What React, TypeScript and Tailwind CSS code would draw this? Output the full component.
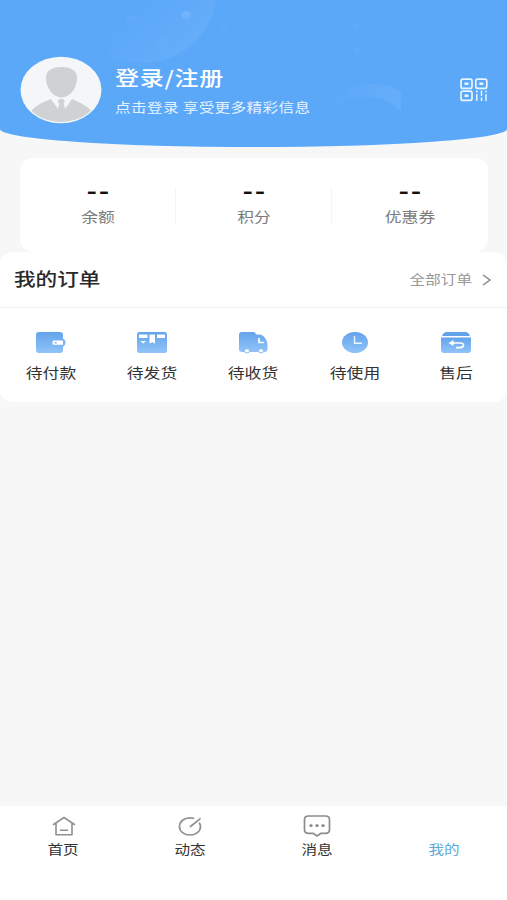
import React from 'react';

type StretchProps = { children: React.ReactNode; className?: string };

function Wide({ children, className = '' }: StretchProps) {
  return <span className={`inline-block scale-x-120 whitespace-nowrap ${className}`}>{children}</span>;
}

function Gradient({ id }: { id: string }) {
  return (
    <defs>
      <linearGradient id={id} x1="0" y1="0" x2="0" y2="1">
        <stop offset="0" stopColor="#62a4ea" />
        <stop offset="1" stopColor="#91c3f9" />
      </linearGradient>
    </defs>
  );
}

function HeaderDecoration() {
  return (
    <svg className="absolute inset-0" width="507" height="147" viewBox="0 0 507 147" fill="none">
      <defs>
        <linearGradient id="bubble" x1="0.1" y1="0" x2="1" y2="0.6">
          <stop offset="0.2" stopColor="#fff" stopOpacity="0" />
          <stop offset="1" stopColor="#fff" stopOpacity="0.07" />
        </linearGradient>
        <linearGradient id="arc" x1="0" y1="0" x2="1" y2="0">
          <stop offset="0" stopColor="#fff" stopOpacity="0" />
          <stop offset="1" stopColor="#fff" stopOpacity="0.07" />
        </linearGradient>
      </defs>
      <path d="M109 0H215C213 34 181 63 142 63C130 63 119 60 109 57Z" fill="url(#bubble)" />
      <ellipse cx="186" cy="15" rx="5" ry="4" fill="#70b3fb" />
      <ellipse cx="132" cy="19" rx="6" ry="4" fill="#62abf9" />
      <ellipse cx="162" cy="43" rx="5" ry="5" fill="#64adfa" />
      <ellipse cx="224" cy="29" rx="4" ry="3" fill="#5faafa" />
      <circle cx="356" cy="27" r="4" fill="#5faafa" />
      <circle cx="357" cy="51" r="4" fill="#5faafa" />
      <path d="M332 108C338 91 352 84 371 84C384 84 394 87 401 92V112C389 98 378 97 365 97C352 97 344 101 338 108Z" fill="url(#arc)" />
    </svg>
  );
}

function Avatar() {
  return (
    <svg className="shrink-0" width="82" height="68" viewBox="0 0 82 68">
      <defs>
        <clipPath id="face"><ellipse cx="41" cy="34" rx="39" ry="32" /></clipPath>
      </defs>
      <ellipse cx="41" cy="34" rx="40.5" ry="33.3" fill="#f5f6f8" />
      <g clipPath="url(#face)" fill="#d0d1d3">
        <path d="M26 22C26 15 31 11 41.500 11C52 11 57 15 57 22C57 32 50 41.500 41.500 41.500C33 41.500 26 32 26 22Z" />
        <path d="M10 57C13 51 21 47 31 43L38 53L39.500 47L37.500 45.500L39.500 43H43L45 45.500L43.500 47L45 53L52 43C61 47 69 51 72 56C65 64 54 67 41 67C28 67 17 64 10 57Z" />
        <path d="M38 52L40 47H42.500L45 52L41.500 55Z" />
      </g>
    </svg>
  );
}

function QrIcon() {
  return (
    <svg width="28" height="24" viewBox="0 0 28 24" fill="none" stroke="#e6f5ff" strokeWidth="1.700">
      <rect x="1" y="1.200" width="11" height="9.200" rx="2" />
      <rect x="15.800" y="1.200" width="11" height="9.200" rx="2" />
      <rect x="1" y="13.200" width="11" height="9.200" rx="2" />
      <path d="M4.500 5.800H8.500M19.300 5.800H23.300M4.500 17.800H8.500" strokeWidth="2.600" />
      <path d="M16.800 12.500V14.500M16.800 16V23M21.500 12.500V18M21.500 19.500V23M26 12.500V14.500M26 16V23" strokeWidth="1.500" />
    </svg>
  );
}

function WalletIcon() {
  return (
    <svg width="32" height="22" viewBox="0 0 32 22">
      <Gradient id="wallet" />
      <path d="M4 0H25Q28 0 28 3V6.500Q30.500 7.500 30.500 10.500T28 15V18Q28 21 25 21H4Q1 21 1 18V3Q1 0 4 0Z" fill="url(#wallet)" />
      <path d="M18.500 8.500H28V12.800H18.500Q17.500 12.800 17.500 11.500V10Q17.500 8.500 18.500 8.500Z" fill="#fff" />
      <rect x="19.700" y="9.900" width="2" height="1.600" fill="#7ab4f2" />
    </svg>
  );
}

function BoxIcon() {
  return (
    <svg width="32" height="22" viewBox="0 0 32 22">
      <Gradient id="box" />
      <rect x="1" y="0" width="30" height="21" rx="2.500" fill="url(#box)" />
      <g fill="#fff">
        <path d="M3 2.500H11.500V6H3ZM13.500 2.500H19V11.500L16.200 10.200L13.500 11.500ZM21 2.500H29V6H21Z" />
        <path d="M5 9H9.500V10.200H8V11.200H6.500V10.200H5Z" />
      </g>
    </svg>
  );
}

function TruckIcon() {
  return (
    <svg width="32" height="22" viewBox="0 0 32 22">
      <Gradient id="truck" />
      <path d="M4.500 0H16.500Q18.500 0 19 2.500H22Q25 2.500 27 4.800Q30.500 8.500 30.500 12V17Q30.500 20 27.500 20H5Q2 20 2 17V3Q2 0 4.500 0Z" fill="url(#truck)" />
      <path d="M22 6.500V10.500H26.500" fill="none" stroke="#fff" strokeWidth="1.700" strokeLinecap="round" strokeLinejoin="round" />
      <g fill="#fff" stroke="#86bcf6" strokeWidth="1">
        <ellipse cx="10" cy="18.800" rx="2.600" ry="2.100" />
        <ellipse cx="24" cy="18.800" rx="2.600" ry="2.100" />
      </g>
    </svg>
  );
}

function ClockIcon() {
  return (
    <svg width="32" height="22" viewBox="0 0 32 22">
      <Gradient id="clock" />
      <ellipse cx="16" cy="10.500" rx="13" ry="10.500" fill="url(#clock)" />
      <path d="M15.500 4.500V11.200H22.500" fill="none" stroke="#e9f5ff" strokeWidth="1.400" strokeLinecap="round" />
    </svg>
  );
}

function ReturnIcon() {
  return (
    <svg width="32" height="22" viewBox="0 0 32 22">
      <Gradient id="return" />
      <path d="M5.500 0H26.500Q29 1 30 4H2Q3 1 5.500 0Z" fill="#62a3e9" />
      <path d="M1 5.500H31V18Q31 21 28 21H4Q1 21 1 18Z" fill="url(#return)" />
      <path d="M11.500 11H20Q23.500 11 23.500 13.200T20 15.600H16" fill="none" stroke="#fff" strokeWidth="1.600" />
      <path d="M13.500 8V14L8.500 11Z" fill="#fff" />
    </svg>
  );
}

function HomeIcon() {
  return (
    <svg className="translate-x-px" width="28" height="24" viewBox="0 0 28 24" fill="none" stroke="#909090" strokeWidth="1.600" strokeLinecap="round" strokeLinejoin="round">
      <path d="M3.500 10.500L14 3.500L24.500 10.500M6 9.500V20.800H22V9.500" />
      <path d="M10.500 16.300H17.500" />
    </svg>
  );
}

function TrendIcon() {
  return (
    <svg width="28" height="24" viewBox="0 0 28 24" fill="none" stroke="#909090" strokeWidth="1.700" strokeLinecap="round">
      <path d="M17.500 4.200Q16 3.800 14 3.800C8 3.800 3.500 7.500 3.500 12.500C3.500 17.500 8 21 14 21S24.500 17.500 24.500 12.500Q24.500 10.800 23.500 9.200" />
      <path d="M14.500 12.500L24 4.800" />
    </svg>
  );
}

function MessageIcon() {
  return (
    <svg width="28" height="24" viewBox="0 0 28 24">
      <path d="M5.500 2H22.500Q26.500 2 26.500 5.500V16Q26.500 19.300 22.500 19.300H18L14 22L10 19.300H5.500Q1.500 19.300 1.500 16V5.500Q1.500 2 5.500 2Z" fill="none" stroke="#8c8c8c" strokeWidth="1.700" strokeLinejoin="round" />
      <g fill="#858585">
        <ellipse cx="8" cy="11.700" rx="1.700" ry="1.400" />
        <ellipse cx="14" cy="11.700" rx="1.700" ry="1.400" />
        <ellipse cx="20" cy="11.700" rx="1.700" ry="1.400" />
      </g>
    </svg>
  );
}

const balances = ['余额', '积分', '优惠券'];

const orders = [
  { label: '待付款', icon: <WalletIcon /> },
  { label: '待发货', icon: <BoxIcon /> },
  { label: '待收货', icon: <TruckIcon /> },
  { label: '待使用', icon: <ClockIcon /> },
  { label: '售后', icon: <ReturnIcon /> },
];

const tabs = [
  { label: '首页', icon: <HomeIcon />, active: false },
  { label: '动态', icon: <TrendIcon />, active: false },
  { label: '消息', icon: <MessageIcon />, active: false },
  { label: '我的', icon: null, active: true },
];

export default function App() {
  return (
    <div className="flex h-[900px] w-[507px] flex-col overflow-hidden bg-[#f7f7f7] font-['Noto_Sans_CJK_SC',sans-serif] text-[#333]">
      <header className="relative h-[147px] shrink-0 overflow-hidden rounded-b-[50%_18px] bg-[#5ba8f9] pt-14">
        <HeaderDecoration />
        <div className="relative flex items-center pr-[19px] pl-5">
          <Avatar />
          <div className="ml-[13px] flex flex-1 flex-col items-start pt-px">
            <Wide className="origin-left text-xl leading-7 font-medium tracking-[0.6px] text-white">登录/注册</Wide>
            <Wide className="mt-[5px] origin-left text-[13px] leading-5 tracking-[0.3px] text-[#e6f3ff]">点击登录 享受更多精彩信息</Wide>
          </div>
          <QrIcon />
        </div>
      </header>

      <section className="mt-[11px] mr-[19px] ml-5 grid h-[94px] shrink-0 grid-cols-3 rounded-[14px/12px] bg-white pt-[29px]">
        {balances.map((label, i) => (
          <div key={label} className={`flex h-9 flex-col items-center ${i < 2 ? 'border-r border-[#f4f4f4]' : ''}`}>
            <span className="-mt-1.5 inline-block scale-x-150 pl-[1.5px] font-['Liberation_Sans',sans-serif] text-xl leading-5 font-bold tracking-[1.5px] text-[#111]">--</span>
            <Wide className="mt-[5px] text-sm leading-5 text-[#7b7b7b]">{label}</Wide>
          </div>
        ))}
      </section>

      <section className="h-[150px] shrink-0 rounded-[14px/11px] bg-white">
        <div className="flex h-14 items-center justify-between border-b border-[#eee] pr-4 pb-0.5 pl-3.5">
          <Wide className="mb-px origin-left text-lg leading-6 font-medium text-[#292929]">我的订单</Wide>
          <div className="flex items-center gap-2.5 text-[#999]">
            <Wide className="origin-right text-[13px] leading-5">全部订单</Wide>
            <svg className="translate-y-px" width="9" height="12" viewBox="0 0 9 12" fill="none" stroke="#888" strokeWidth="1.400"><path d="M1 1L8 6L1 11" /></svg>
          </div>
        </div>
        <div className="grid grid-cols-5 pt-6">
          {orders.map(({ label, icon }) => (
            <div key={label} className="flex flex-col items-center">
              {icon}
              <Wide className="mt-2 text-sm leading-5">{label}</Wide>
            </div>
          ))}
        </div>
      </section>

      <nav className="mt-auto grid h-[94px] shrink-0 grid-cols-4 bg-white pt-2">
        {tabs.map(({ label, icon, active }) => (
          <div key={label} className="flex flex-col items-center">
            <div className="h-6">{icon}</div>
            <Wide className={`mt-px text-[13px] leading-5 ${active ? 'text-[#62a8d9]' : 'text-[#333]'}`}>{label}</Wide>
          </div>
        ))}
      </nav>
    </div>
  );
}
